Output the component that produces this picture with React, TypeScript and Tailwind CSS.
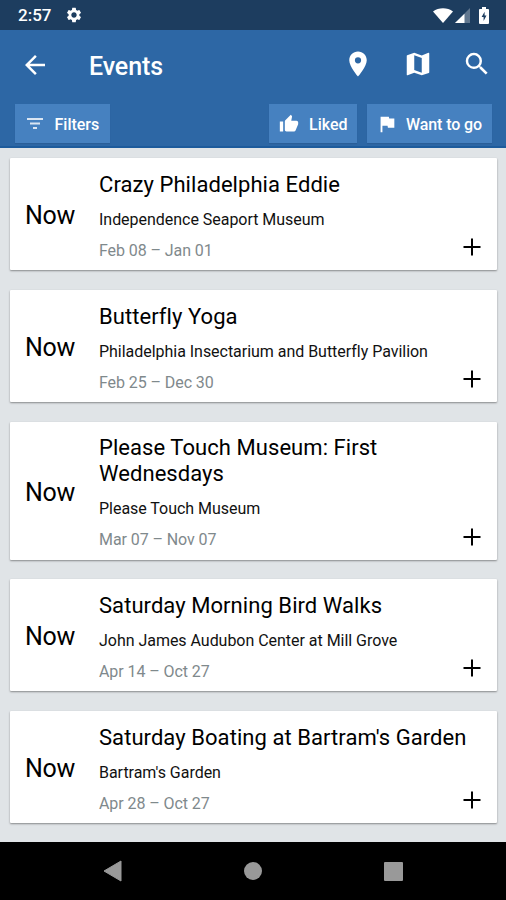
import React from 'react'
import { MdArrowBack, MdFlag, MdPlace, MdSearch, MdSettings, MdThumbUp } from 'react-icons/md'

interface Event {
  title: string
  venue: string
  dates: string
}

const events: Event[] = [
  {
    title: 'Crazy Philadelphia Eddie',
    venue: 'Independence Seaport Museum',
    dates: 'Feb 08 – Jan 01',
  },
  {
    title: 'Butterfly Yoga',
    venue: 'Philadelphia Insectarium and Butterfly Pavilion',
    dates: 'Feb 25 – Dec 30',
  },
  {
    title: 'Please Touch Museum: First Wednesdays',
    venue: 'Please Touch Museum',
    dates: 'Mar 07 – Nov 07',
  },
  {
    title: 'Saturday Morning Bird Walks',
    venue: 'John James Audubon Center at Mill Grove',
    dates: 'Apr 14 – Oct 27',
  },
  {
    title: "Saturday Boating at Bartram's Garden",
    venue: "Bartram's Garden",
    dates: 'Apr 28 – Oct 27',
  },
]

const StatusBar: React.FC = () => (
  <div className="flex h-[30px] shrink-0 items-center bg-[#1d3d5f] pr-[17px] pl-[18px] text-white">
    <span className="pt-px text-[17px] leading-none font-medium">2:57</span>
    <MdSettings className="ml-[14px] size-[18px]" />
    <svg className="ml-auto h-[15px] w-[20px]" viewBox="0 0 20 16" preserveAspectRatio="none">
      <path d="M0 3.6C5.6-.9 14.4-.9 20 3.6L10 16z" fill="currentColor" />
    </svg>
    <svg className="ml-[2px] h-[16px] w-[15px]" viewBox="0 0 15 16">
      <path d="M15 1v15H0z" fill="currentColor" opacity="0.3" />
      <path d="M9.5 6.8V16H0z" fill="currentColor" />
    </svg>
    <svg className="ml-[9px] h-[17px] w-[10px]" viewBox="0 0 10 18" preserveAspectRatio="none">
      <path
        d="M3 0h4v2h2a1 1 0 0 1 1 1v14a1 1 0 0 1-1 1H1a1 1 0 0 1-1-1V3a1 1 0 0 1 1-1h2z"
        fill="currentColor"
      />
      <path d="M5.6 5 2.6 10.5h2v4.2l2.9-5.6H5.6z" fill="#1d3d5f" />
    </svg>
  </div>
)

const Header: React.FC = () => (
  <header className="flex h-[118px] shrink-0 flex-col border-b-2 border-[#1d5b9c] bg-[#2d67a5] text-white">
    <div className="flex h-[70px] items-center pr-[14px] pl-5">
      <button type="button" aria-label="Back" className="pb-px">
        <MdArrowBack className="size-[30px]" />
      </button>
      <h1 className="ml-[39px] pt-[3px] text-[25px] font-medium tracking-[-0.1px]">Events</h1>
      <div className="ml-auto flex items-center pb-[3px]">
        <MdPlace className="size-[30px]" />
        <svg className="ml-[30px] size-[30px]" viewBox="0 0 24 24" fill="currentColor">
          <path d="M20.5 3l-.16.03L15 5.1 9 3 3.36 4.9c-.21.07-.36.25-.36.48V20.5c0 .28.22.5.5.5l.16-.03L9 18.9l6 2.1 5.64-1.9c.21-.07.36-.25.36-.48V3.5c0-.28-.22-.5-.5-.5zM15 19l-6-2.11V5l6 2.11V19z" />
        </svg>
        <MdSearch className="ml-[29px] size-[30px]" />
      </div>
    </div>
    <div className="mt-[4px] flex h-[39px] pr-[14px] pl-[15px] text-[16px] font-medium">
      <button
        type="button"
        className="flex w-[95px] items-center bg-[#4681c0] pl-[12px] shadow-[0_1px_1px_rgba(0,0,0,0.08)]"
      >
        <svg className="h-[11px] w-[16px] opacity-80" viewBox="0 0 16 11">
          <path d="M0 1h16M3 5.5h10M6 10h4" stroke="currentColor" strokeWidth="2" />
        </svg>
        <span className="ml-[11.5px] pt-[2px] whitespace-nowrap">Filters</span>
      </button>
      <button
        type="button"
        className="ml-auto flex w-[88px] items-center bg-[#4681c0] pl-[10px] shadow-[0_1px_1px_rgba(0,0,0,0.08)]"
      >
        <MdThumbUp className="size-[20px]" />
        <span className="ml-[10px] pt-[2px] whitespace-nowrap">Liked</span>
      </button>
      <button
        type="button"
        className="ml-[10px] flex w-[125px] items-center bg-[#4681c0] pl-[9px] shadow-[0_1px_1px_rgba(0,0,0,0.08)]"
      >
        <MdFlag className="size-[22px]" />
        <span className="ml-[8px] pt-[2px] tracking-[-0.1px] whitespace-nowrap">Want to go</span>
      </button>
    </div>
  </header>
)

const EventCard: React.FC<{ event: Event }> = ({ event }) => (
  <article className="flex rounded-[1px] bg-white shadow-[0_1px_2px_rgba(0,0,0,0.4)]">
    <div className="flex w-[89px] shrink-0 items-center pt-[3px] pl-[15px] text-[25px] tracking-[-0.3px] text-black">
      Now
    </div>
    <div className="min-w-0 flex-1 pt-[13.5px] pb-[8.5px]">
      <h2 className="pr-[20px] text-[22px] leading-[26px] tracking-[0.06px] text-black">
        {event.title}
      </h2>
      <p className="mt-[12px] text-[16px] leading-[20px] tracking-[-0.03px] text-[#111]">
        {event.venue}
      </p>
      <p className="mt-[10px] text-[16px] leading-[22px] tracking-[-0.08px] text-[#7f898c]">
        {event.dates}
      </p>
    </div>
    <button
      type="button"
      aria-label="Add"
      className="mr-[16px] mb-[14px] -ml-[34px] self-end text-black"
    >
      <svg className="block size-[18px]" viewBox="0 0 18 18">
        <path d="M9 0.5v17M0.5 9h17" stroke="currentColor" strokeWidth="2" />
      </svg>
    </button>
  </article>
)

const NavigationBar: React.FC = () => (
  <nav className="flex h-[58px] shrink-0 items-center justify-center gap-[122px] bg-black text-[#999]">
    <svg className="h-[22px] w-[19px]" viewBox="0 0 19 22">
      <path d="M18 1v20L1 11z" fill="currentColor" stroke="currentColor" strokeLinejoin="round" />
    </svg>
    <span className="size-[18px] rounded-full bg-[#999]" />
    <span className="size-[19px] rounded-[1px] bg-[#999]" />
  </nav>
)

const App: React.FC = () => {
  return (
    <div className="flex h-[900px] w-[506px] flex-col overflow-hidden bg-[#e0e4e7] font-['Roboto',sans-serif]">
      <StatusBar />
      <Header />
      <main className="flex min-h-0 flex-1 flex-col gap-[19.7px] pt-[10.4px] pr-[9px] pl-[10px]">
        {events.map((event) => (
          <EventCard key={event.title} event={event} />
        ))}
      </main>
      <NavigationBar />
    </div>
  )
}

export default App
